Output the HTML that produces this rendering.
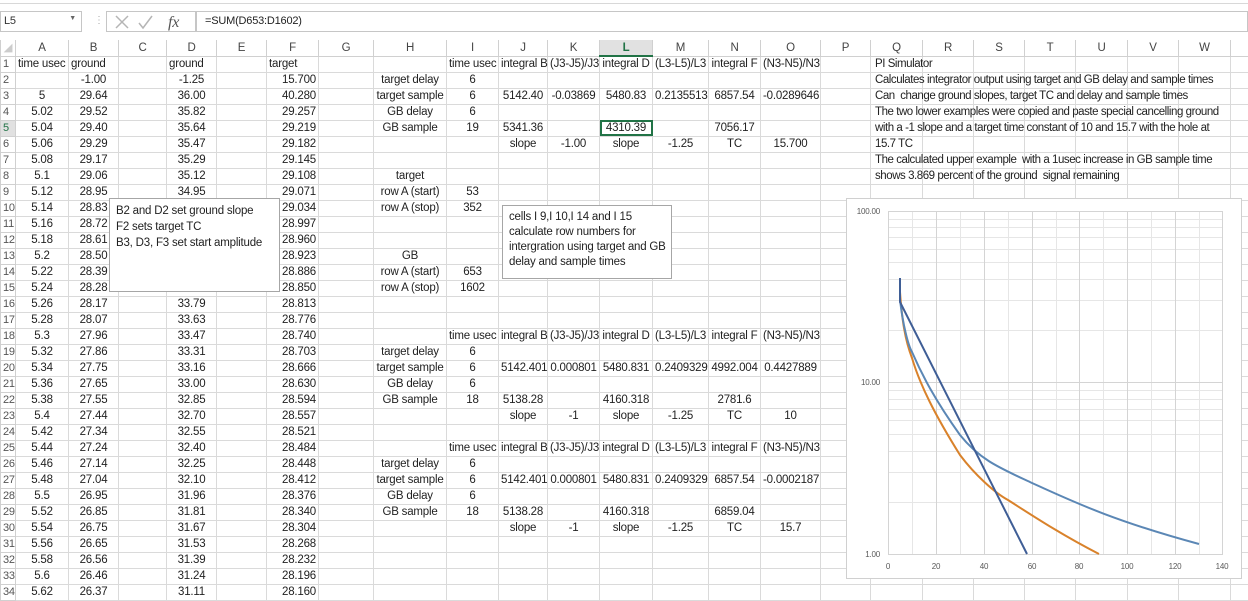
<!DOCTYPE html>
<html><head><meta charset="utf-8">
<style>
*{margin:0;padding:0;box-sizing:border-box}
body{width:1248px;height:599px;overflow:hidden;background:#fff;font-family:"Liberation Sans",sans-serif;font-size:11.5px;letter-spacing:-0.2px;color:#222;position:relative}
table{position:absolute;left:0;top:40px;width:1248px;border-collapse:collapse;table-layout:fixed}
td,th{height:16px;border:1px solid #dadada;white-space:nowrap;overflow:visible;text-align:center;font-weight:normal;padding:0 2px;line-height:14px}
thead th{color:#444;border-color:#d0d0d0;border-top:none}
tbody th{color:#555;text-align:left;padding-left:2px;font-size:11px;border-color:#d0d0d0}
tbody td:nth-child(7){text-align:right}
tbody td:nth-child(18){text-align:left;padding-left:4px;letter-spacing:-0.45px;overflow:visible}
.l{text-align:left!important}
.sel{background:#e1e1e1;font-weight:bold;color:#217346;border-bottom:2px solid #217346}
.selr{background:#e1e1e1;color:#217346}
.box{position:absolute;background:#fff;border:1px solid #a6a6a6;padding:3px 6px;line-height:15px;font-size:11.5px;white-space:nowrap}
</style></head><body>
<div style="position:absolute;left:0;top:3px;width:1248px;height:1px;background:#d8d8d8"></div>
<div style="position:absolute;left:0;top:11px;width:82px;height:21px;border:1px solid #c6c6c6;font-size:11px;padding:3px 3px;color:#333">L5<span style="position:absolute;right:5px;top:3px;font-size:7px;color:#666">▼</span></div>
<div style="position:absolute;left:94px;top:15px;color:#aaa;font-size:10px">⋮</div>
<div style="position:absolute;left:106px;top:11px;width:90px;height:21px;border:1px solid #c6c6c6"></div>
<svg style="position:absolute;left:112px;top:13px" width="80" height="18"><path d="M4 3 L16 15 M16 3 L4 15" stroke="#b5b5b5" stroke-width="1.5" fill="none"/><path d="M27 10 L31 15 L40 3" stroke="#b5b5b5" stroke-width="1.5" fill="none"/><text x="56" y="14" font-family="Liberation Serif" font-style="italic" font-size="16" fill="#555">fx</text></svg>
<div style="position:absolute;left:196px;top:11px;width:1052px;height:21px;border:1px solid #c6c6c6;padding:3px 8px;font-size:11px;color:#222">=SUM(D653:D1602)</div>
<table>
<colgroup><col style="width:15px"><col style="width:53px"><col style="width:50px"><col style="width:48px"><col style="width:50px"><col style="width:50px"><col style="width:52px"><col style="width:55px"><col style="width:73px"><col style="width:52px"><col style="width:49px"><col style="width:52px"><col style="width:53px"><col style="width:56px"><col style="width:52px"><col style="width:60px"><col style="width:50px"><col style="width:52px"><col style="width:51px"><col style="width:51px"><col style="width:51px"><col style="width:52px"><col style="width:51px"><col style="width:52px"><col style="width:18px"></colgroup>
<thead><tr><th style="color:#ccc">◢</th><th>A</th><th>B</th><th>C</th><th>D</th><th>E</th><th>F</th><th>G</th><th>H</th><th>I</th><th>J</th><th>K</th><th class="sel">L</th><th>M</th><th>N</th><th>O</th><th>P</th><th>Q</th><th>R</th><th>S</th><th>T</th><th>U</th><th>V</th><th>W</th><th></th></tr></thead>
<tbody>
<tr><th>1</th><td class="l">time usec</td><td class="l">ground</td><td></td><td class="l">ground</td><td></td><td class="l">target</td><td></td><td></td><td>time usec</td><td>integral B</td><td>(J3-J5)/J3</td><td>integral D</td><td>(L3-L5)/L3</td><td>integral F</td><td>(N3-N5)/N3</td><td></td><td>PI Simulator</td><td></td><td></td><td></td><td></td><td></td><td></td><td></td></tr>
<tr><th>2</th><td></td><td>-1.00</td><td></td><td>-1.25</td><td></td><td>15.700</td><td></td><td>target delay</td><td>6</td><td></td><td></td><td></td><td></td><td></td><td></td><td></td><td>Calculates integrator output using target and GB delay and sample times</td><td></td><td></td><td></td><td></td><td></td><td></td><td></td></tr>
<tr><th>3</th><td>5</td><td>29.64</td><td></td><td>36.00</td><td></td><td>40.280</td><td></td><td>target sample</td><td>6</td><td>5142.40</td><td>-0.03869</td><td>5480.83</td><td>0.2135513</td><td>6857.54</td><td>-0.0289646</td><td></td><td>Can &nbsp;change ground slopes, target TC and delay and sample times</td><td></td><td></td><td></td><td></td><td></td><td></td><td></td></tr>
<tr><th>4</th><td>5.02</td><td>29.52</td><td></td><td>35.82</td><td></td><td>29.257</td><td></td><td>GB delay</td><td>6</td><td></td><td></td><td></td><td></td><td></td><td></td><td></td><td>The two lower examples were copied and paste special cancelling ground</td><td></td><td></td><td></td><td></td><td></td><td></td><td></td></tr>
<tr><th class="selr">5</th><td>5.04</td><td>29.40</td><td></td><td>35.64</td><td></td><td>29.219</td><td></td><td>GB sample</td><td>19</td><td>5341.36</td><td></td><td style="outline:2px solid #217346;outline-offset:-2px">4310.39</td><td></td><td>7056.17</td><td></td><td></td><td>with a -1 slope and a target time constant of 10 and 15.7 with the hole at</td><td></td><td></td><td></td><td></td><td></td><td></td><td></td></tr>
<tr><th>6</th><td>5.06</td><td>29.29</td><td></td><td>35.47</td><td></td><td>29.182</td><td></td><td></td><td></td><td>slope</td><td>-1.00</td><td>slope</td><td>-1.25</td><td>TC</td><td>15.700</td><td></td><td>15.7 TC</td><td></td><td></td><td></td><td></td><td></td><td></td><td></td></tr>
<tr><th>7</th><td>5.08</td><td>29.17</td><td></td><td>35.29</td><td></td><td>29.145</td><td></td><td></td><td></td><td></td><td></td><td></td><td></td><td></td><td></td><td></td><td>The calculated upper example &nbsp;with a 1usec increase in GB sample time</td><td></td><td></td><td></td><td></td><td></td><td></td><td></td></tr>
<tr><th>8</th><td>5.1</td><td>29.06</td><td></td><td>35.12</td><td></td><td>29.108</td><td></td><td>target</td><td></td><td></td><td></td><td></td><td></td><td></td><td></td><td></td><td>shows 3.869 percent of the ground &nbsp;signal remaining</td><td></td><td></td><td></td><td></td><td></td><td></td><td></td></tr>
<tr><th>9</th><td>5.12</td><td>28.95</td><td></td><td>34.95</td><td></td><td>29.071</td><td></td><td>row A (start)</td><td>53</td><td></td><td></td><td></td><td></td><td></td><td></td><td></td><td></td><td></td><td></td><td></td><td></td><td></td><td></td><td></td></tr>
<tr><th>10</th><td>5.14</td><td>28.83</td><td></td><td></td><td></td><td>29.034</td><td></td><td>row A (stop)</td><td>352</td><td></td><td></td><td></td><td></td><td></td><td></td><td></td><td></td><td></td><td></td><td></td><td></td><td></td><td></td><td></td></tr>
<tr><th>11</th><td>5.16</td><td>28.72</td><td></td><td></td><td></td><td>28.997</td><td></td><td></td><td></td><td></td><td></td><td></td><td></td><td></td><td></td><td></td><td></td><td></td><td></td><td></td><td></td><td></td><td></td><td></td></tr>
<tr><th>12</th><td>5.18</td><td>28.61</td><td></td><td></td><td></td><td>28.960</td><td></td><td></td><td></td><td></td><td></td><td></td><td></td><td></td><td></td><td></td><td></td><td></td><td></td><td></td><td></td><td></td><td></td><td></td></tr>
<tr><th>13</th><td>5.2</td><td>28.50</td><td></td><td></td><td></td><td>28.923</td><td></td><td>GB</td><td></td><td></td><td></td><td></td><td></td><td></td><td></td><td></td><td></td><td></td><td></td><td></td><td></td><td></td><td></td><td></td></tr>
<tr><th>14</th><td>5.22</td><td>28.39</td><td></td><td></td><td></td><td>28.886</td><td></td><td>row A (start)</td><td>653</td><td></td><td></td><td></td><td></td><td></td><td></td><td></td><td></td><td></td><td></td><td></td><td></td><td></td><td></td><td></td></tr>
<tr><th>15</th><td>5.24</td><td>28.28</td><td></td><td></td><td></td><td>28.850</td><td></td><td>row A (stop)</td><td>1602</td><td></td><td></td><td></td><td></td><td></td><td></td><td></td><td></td><td></td><td></td><td></td><td></td><td></td><td></td><td></td></tr>
<tr><th>16</th><td>5.26</td><td>28.17</td><td></td><td>33.79</td><td></td><td>28.813</td><td></td><td></td><td></td><td></td><td></td><td></td><td></td><td></td><td></td><td></td><td></td><td></td><td></td><td></td><td></td><td></td><td></td><td></td></tr>
<tr><th>17</th><td>5.28</td><td>28.07</td><td></td><td>33.63</td><td></td><td>28.776</td><td></td><td></td><td></td><td></td><td></td><td></td><td></td><td></td><td></td><td></td><td></td><td></td><td></td><td></td><td></td><td></td><td></td><td></td></tr>
<tr><th>18</th><td>5.3</td><td>27.96</td><td></td><td>33.47</td><td></td><td>28.740</td><td></td><td></td><td>time usec</td><td>integral B</td><td>(J3-J5)/J3</td><td>integral D</td><td>(L3-L5)/L3</td><td>integral F</td><td>(N3-N5)/N3</td><td></td><td></td><td></td><td></td><td></td><td></td><td></td><td></td><td></td></tr>
<tr><th>19</th><td>5.32</td><td>27.86</td><td></td><td>33.31</td><td></td><td>28.703</td><td></td><td>target delay</td><td>6</td><td></td><td></td><td></td><td></td><td></td><td></td><td></td><td></td><td></td><td></td><td></td><td></td><td></td><td></td><td></td></tr>
<tr><th>20</th><td>5.34</td><td>27.75</td><td></td><td>33.16</td><td></td><td>28.666</td><td></td><td>target sample</td><td>6</td><td>5142.401</td><td>0.000801</td><td>5480.831</td><td>0.2409329</td><td>4992.004</td><td>0.4427889</td><td></td><td></td><td></td><td></td><td></td><td></td><td></td><td></td><td></td></tr>
<tr><th>21</th><td>5.36</td><td>27.65</td><td></td><td>33.00</td><td></td><td>28.630</td><td></td><td>GB delay</td><td>6</td><td></td><td></td><td></td><td></td><td></td><td></td><td></td><td></td><td></td><td></td><td></td><td></td><td></td><td></td><td></td></tr>
<tr><th>22</th><td>5.38</td><td>27.55</td><td></td><td>32.85</td><td></td><td>28.594</td><td></td><td>GB sample</td><td>18</td><td>5138.28</td><td></td><td>4160.318</td><td></td><td>2781.6</td><td></td><td></td><td></td><td></td><td></td><td></td><td></td><td></td><td></td><td></td></tr>
<tr><th>23</th><td>5.4</td><td>27.44</td><td></td><td>32.70</td><td></td><td>28.557</td><td></td><td></td><td></td><td>slope</td><td>-1</td><td>slope</td><td>-1.25</td><td>TC</td><td>10</td><td></td><td></td><td></td><td></td><td></td><td></td><td></td><td></td><td></td></tr>
<tr><th>24</th><td>5.42</td><td>27.34</td><td></td><td>32.55</td><td></td><td>28.521</td><td></td><td></td><td></td><td></td><td></td><td></td><td></td><td></td><td></td><td></td><td></td><td></td><td></td><td></td><td></td><td></td><td></td><td></td></tr>
<tr><th>25</th><td>5.44</td><td>27.24</td><td></td><td>32.40</td><td></td><td>28.484</td><td></td><td></td><td>time usec</td><td>integral B</td><td>(J3-J5)/J3</td><td>integral D</td><td>(L3-L5)/L3</td><td>integral F</td><td>(N3-N5)/N3</td><td></td><td></td><td></td><td></td><td></td><td></td><td></td><td></td><td></td></tr>
<tr><th>26</th><td>5.46</td><td>27.14</td><td></td><td>32.25</td><td></td><td>28.448</td><td></td><td>target delay</td><td>6</td><td></td><td></td><td></td><td></td><td></td><td></td><td></td><td></td><td></td><td></td><td></td><td></td><td></td><td></td><td></td></tr>
<tr><th>27</th><td>5.48</td><td>27.04</td><td></td><td>32.10</td><td></td><td>28.412</td><td></td><td>target sample</td><td>6</td><td>5142.401</td><td>0.000801</td><td>5480.831</td><td>0.2409329</td><td>6857.54</td><td>-0.0002187</td><td></td><td></td><td></td><td></td><td></td><td></td><td></td><td></td><td></td></tr>
<tr><th>28</th><td>5.5</td><td>26.95</td><td></td><td>31.96</td><td></td><td>28.376</td><td></td><td>GB delay</td><td>6</td><td></td><td></td><td></td><td></td><td></td><td></td><td></td><td></td><td></td><td></td><td></td><td></td><td></td><td></td><td></td></tr>
<tr><th>29</th><td>5.52</td><td>26.85</td><td></td><td>31.81</td><td></td><td>28.340</td><td></td><td>GB sample</td><td>18</td><td>5138.28</td><td></td><td>4160.318</td><td></td><td>6859.04</td><td></td><td></td><td></td><td></td><td></td><td></td><td></td><td></td><td></td><td></td></tr>
<tr><th>30</th><td>5.54</td><td>26.75</td><td></td><td>31.67</td><td></td><td>28.304</td><td></td><td></td><td></td><td>slope</td><td>-1</td><td>slope</td><td>-1.25</td><td>TC</td><td>15.7</td><td></td><td></td><td></td><td></td><td></td><td></td><td></td><td></td><td></td></tr>
<tr><th>31</th><td>5.56</td><td>26.65</td><td></td><td>31.53</td><td></td><td>28.268</td><td></td><td></td><td></td><td></td><td></td><td></td><td></td><td></td><td></td><td></td><td></td><td></td><td></td><td></td><td></td><td></td><td></td><td></td></tr>
<tr><th>32</th><td>5.58</td><td>26.56</td><td></td><td>31.39</td><td></td><td>28.232</td><td></td><td></td><td></td><td></td><td></td><td></td><td></td><td></td><td></td><td></td><td></td><td></td><td></td><td></td><td></td><td></td><td></td><td></td></tr>
<tr><th>33</th><td>5.6</td><td>26.46</td><td></td><td>31.24</td><td></td><td>28.196</td><td></td><td></td><td></td><td></td><td></td><td></td><td></td><td></td><td></td><td></td><td></td><td></td><td></td><td></td><td></td><td></td><td></td><td></td></tr>
<tr><th>34</th><td>5.62</td><td>26.37</td><td></td><td>31.11</td><td></td><td>28.160</td><td></td><td></td><td></td><td></td><td></td><td></td><td></td><td></td><td></td><td></td><td></td><td></td><td></td><td></td><td></td><td></td><td></td><td></td></tr>
</tbody></table>

<div class="box" style="left:109px;top:198px;width:171px;height:94px;padding-top:4px;line-height:16px">B2 and D2 set ground slope<br>F2 sets target TC<br>B3, D3, F3 set start amplitude</div>
<div class="box" style="left:502px;top:205px;width:170px;height:74px;padding-top:4px">cells I 9,I 10,I 14 and I 15<br>calculate row numbers for<br>intergration using target and GB<br>delay and sample times</div>

<svg style="position:absolute;left:0;top:0" width="1248" height="599">
<rect x="846.5" y="198.5" width="395" height="380" fill="#fff" stroke="#d0d0d0"/>
<g stroke="#e6e6e6" stroke-width="1">
<line x1="888" y1="330.5" x2="1223" y2="330.5"/><line x1="888" y1="300.5" x2="1223" y2="300.5"/><line x1="888" y1="279.5" x2="1223" y2="279.5"/><line x1="888" y1="262.5" x2="1223" y2="262.5"/><line x1="888" y1="249.5" x2="1223" y2="249.5"/><line x1="888" y1="237.5" x2="1223" y2="237.5"/><line x1="888" y1="227.5" x2="1223" y2="227.5"/><line x1="888" y1="219.5" x2="1223" y2="219.5"/>
<line x1="888" y1="502.5" x2="1223" y2="502.5"/><line x1="888" y1="472.5" x2="1223" y2="472.5"/><line x1="888" y1="451.5" x2="1223" y2="451.5"/><line x1="888" y1="434.5" x2="1223" y2="434.5"/><line x1="888" y1="420.5" x2="1223" y2="420.5"/><line x1="888" y1="409.5" x2="1223" y2="409.5"/><line x1="888" y1="399.5" x2="1223" y2="399.5"/><line x1="888" y1="390.5" x2="1223" y2="390.5"/>
<line x1="912.5" y1="211" x2="912.5" y2="554"/><line x1="960.5" y1="211" x2="960.5" y2="554"/><line x1="1008.5" y1="211" x2="1008.5" y2="554"/><line x1="1056.5" y1="211" x2="1056.5" y2="554"/><line x1="1103.5" y1="211" x2="1103.5" y2="554"/><line x1="1151.5" y1="211" x2="1151.5" y2="554"/><line x1="1199.5" y1="211" x2="1199.5" y2="554"/>
</g>
<g stroke="#d4d4d4" stroke-width="1">
<line x1="888" y1="211.5" x2="1223" y2="211.5"/><line x1="888" y1="382.5" x2="1223" y2="382.5"/><line x1="888" y1="554.5" x2="1223" y2="554.5"/>
<line x1="888.5" y1="211" x2="888.5" y2="554"/><line x1="936.5" y1="211" x2="936.5" y2="554"/><line x1="984.5" y1="211" x2="984.5" y2="554"/><line x1="1032.5" y1="211" x2="1032.5" y2="554"/><line x1="1079.5" y1="211" x2="1079.5" y2="554"/><line x1="1127.5" y1="211" x2="1127.5" y2="554"/><line x1="1175.5" y1="211" x2="1175.5" y2="554"/><line x1="1222.5" y1="211" x2="1222.5" y2="554"/>
</g>
<g font-family="Liberation Sans" font-size="8" fill="#595959">
<text x="880" y="214" text-anchor="end">100.00</text><text x="880" y="385" text-anchor="end">10.00</text><text x="880" y="557" text-anchor="end">1.00</text>
<text x="888" y="569" text-anchor="middle">0</text><text x="936" y="569" text-anchor="middle">20</text><text x="984" y="569" text-anchor="middle">40</text><text x="1032" y="569" text-anchor="middle">60</text><text x="1079" y="569" text-anchor="middle">80</text><text x="1127" y="569" text-anchor="middle">100</text><text x="1175" y="569" text-anchor="middle">120</text><text x="1222" y="569" text-anchor="middle">140</text>
</g>
<path d="M900 292 C902 320,905 340,912 358 C920 385,935 415,960 455 C975 475,995 493,1008 500 C1030 514,1060 534,1099 554" stroke="#d9822b" stroke-width="2" fill="none"/>
<path d="M900 300 C903 325,908 345,912 352 C922 375,935 400,960 435 C980 460,1000 468,1032 483 C1070 500,1110 520,1199 544" stroke="#5b87b5" stroke-width="2" fill="none"/>
<path d="M900 278 L900 302 L1027 554" stroke="#3f5e96" stroke-width="2" fill="none"/>
</svg>
</body></html>
